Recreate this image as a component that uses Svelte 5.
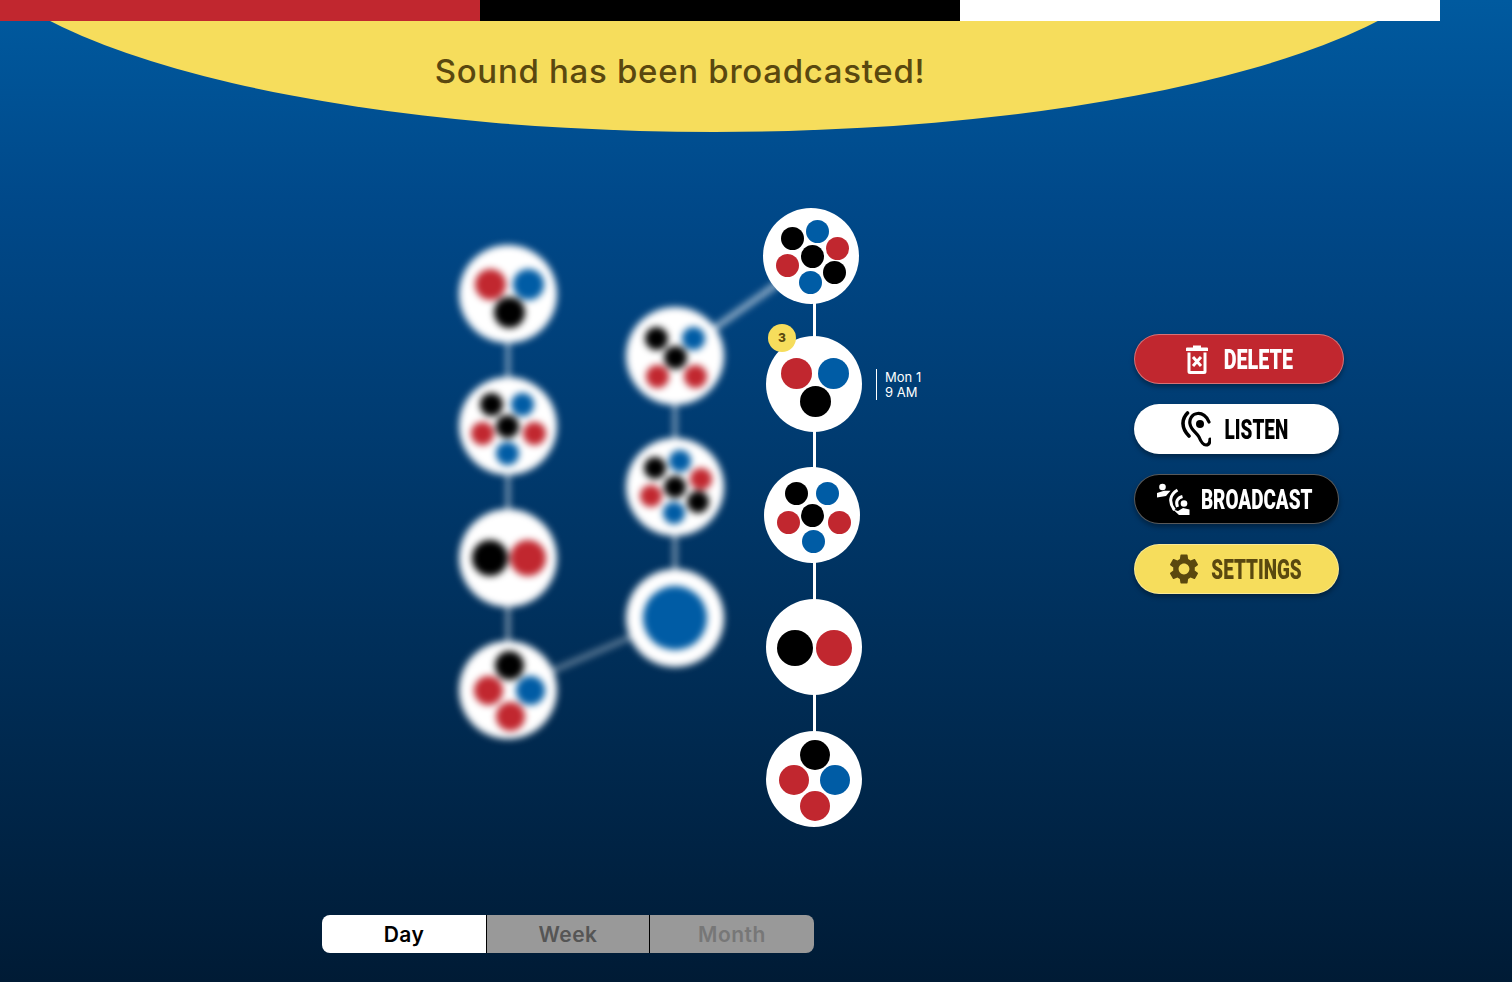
<script>
	const RED = '#c1272f';
	const BLUE = '#005ca5';
	const BLACK = '#000';

	// page coordinates of the node centres, dots are page coordinates too
	const d = (x, y, r, color) => ({ x, y, r, color });

	const sharpNodes = [
		{ x: 811, y: 256, dots: [d(792, 238, 11.5, BLACK), d(817, 231, 11.5, BLUE), d(837, 248, 11.5, RED), d(812, 256, 11.5, BLACK), d(834, 272, 11.5, BLACK), d(810, 282, 11.5, BLUE), d(787, 265, 11.5, RED)] },
		{ x: 814, y: 384, dots: [d(796, 373, 15.5, RED), d(833, 373, 15.5, BLUE), d(815, 401, 15.5, BLACK)] },
		{ x: 812, y: 515, dots: [d(796, 493, 11.5, BLACK), d(827, 493, 11.5, BLUE), d(812, 515, 11.5, BLACK), d(788, 522, 11.5, RED), d(839, 522, 11.5, RED), d(813, 541, 11.5, BLUE)] },
		{ x: 814, y: 647, dots: [d(795, 648, 18, BLACK), d(834, 648, 18, RED)] },
		{ x: 814, y: 779, dots: [d(815, 755, 15, BLACK), d(794, 780, 15, RED), d(835, 780, 15, BLUE), d(815, 806, 15, RED)] }
	];

	const blurredNodes = [
		{ x: 508, y: 294, dots: [d(490, 284, 15.5, RED), d(528, 284, 15.5, BLUE), d(509, 312, 15.5, BLACK)] },
		{ x: 508, y: 426, dots: [d(491, 404, 11.5, BLACK), d(522, 404, 11.5, BLUE), d(507, 426, 11.5, BLACK), d(482, 433, 11.5, RED), d(534, 433, 11.5, RED), d(507, 453, 11.5, BLUE)] },
		{ x: 508, y: 558, dots: [d(490, 558, 18, BLACK), d(528, 558, 18, RED)] },
		{ x: 508, y: 690, dots: [d(509, 665, 14.5, BLACK), d(488, 690, 14.5, RED), d(530, 690, 14.5, BLUE), d(510, 716, 14.5, RED)] },
		{ x: 675, y: 356, dots: [d(656, 338, 11.5, BLACK), d(693, 338, 11.5, BLUE), d(675, 357, 11.5, BLACK), d(657, 376, 11.5, RED), d(695, 376, 11.5, RED)] },
		{ x: 675, y: 487, dots: [d(655, 468, 11, BLACK), d(680, 461, 11, BLUE), d(701, 479, 11, RED), d(675, 487, 11, BLACK), d(698, 502, 11, BLACK), d(674, 513, 11, BLUE), d(651, 496, 11, RED)] },
		{ x: 675, y: 618, dots: [d(675, 618, 32, BLUE)] }
	];

	const NODE_R = 48;
	const TOP = 21; // the canvas starts under the colour bars

	const tabs = ['Day', 'Week', 'Month'];
</script>

{#snippet graphNode(node)}
	<div
		class="node"
		style="left: {node.x - NODE_R}px; top: {node.y - NODE_R - TOP}px"
	>
		{#each node.dots as dot}
			<span
				class="dot"
				style="left: {dot.x - node.x + NODE_R - dot.r}px; top: {dot.y - node.y + NODE_R - dot.r}px; width: {dot.r * 2}px; height: {dot.r * 2}px; background: {dot.color}"
			></span>
		{/each}
	</div>
{/snippet}

<div class="page">
	<div class="banner"><p>Sound has been broadcasted!</p></div>

	<div class="bars">
		<span class="bar red"></span>
		<span class="bar black"></span>
		<span class="bar white"></span>
	</div>

	<div class="stage">
		<div class="canvas">
			<div class="blurred">
				<svg class="wires" viewBox="0 21 1134 860" width="1134" height="860">
					<path d="M508 294V690M675 356V618" stroke="#fff" stroke-opacity="0.6" stroke-width="4" fill="none" />
					<path d="M508 690L675 618" stroke="#fff" stroke-opacity="0.42" stroke-width="5" fill="none" />
					<path d="M675 356L790 275" stroke="#fff" stroke-opacity="0.6" stroke-width="6" fill="none" />
				</svg>
				{#each blurredNodes as node}
					{@render graphNode(node)}
				{/each}
			</div>

			<svg class="wires" viewBox="0 21 1134 860" width="1134" height="860">
				<path d="M814.5 290V779" stroke="#fff" stroke-width="3" fill="none" />
			</svg>
			{#each sharpNodes as node}
				{@render graphNode(node)}
			{/each}

			<span class="badge">3</span>
			<div class="when">
				<span>Mon 1</span>
				<span>9 AM</span>
			</div>
		</div>

		<div class="actions">
			<button class="action delete">
				<svg width="24" height="30" viewBox="0 0 24 30">
					<path d="M1 4.500Q1 3.500 2 3.500H8V1.500H16V3.500H22Q23 3.500 23 4.500V7H1Z" fill="currentColor" />
					<path d="M4 8.500V27.500Q4 28.500 5 28.500H19Q20 28.500 20 27.500V8.500" fill="none" stroke="currentColor" stroke-width="3" />
					<path d="M8 13l8 9M16 13l-8 9" stroke="currentColor" stroke-width="3" fill="none" />
				</svg>
				<span class="label"><span>DELETE</span></span>
			</button>
			<button class="action listen">
				<svg width="30" height="38" viewBox="9 5 30 38">
					<path d="M15.500 8C9.500 14 9 23 17 31" fill="none" stroke="currentColor" stroke-width="3.600" stroke-linecap="round" />
					<path d="M37 17C35 11 30 8 25.500 8.500C20 9 17 14 18 19C19 25 24 27 27 32C29 37 31 40 34 40C37 40 38 37 38 34" fill="none" stroke="currentColor" stroke-width="3.200" stroke-linecap="round" />
					<circle cx="28" cy="19" r="4" fill="currentColor" />
				</svg>
				<span class="label"><span>LISTEN</span></span>
			</button>
			<button class="action broadcast">
				<svg width="34" height="34" viewBox="0 0 34 34">
					<circle cx="6.500" cy="5" r="3.300" fill="currentColor" />
					<path d="M1 15.500V11L8 8.700H14.500L10 14Z" fill="currentColor" />
					<path d="M21.500 8C13 13 13 21 18.500 28" fill="none" stroke="currentColor" stroke-width="3" />
					<path d="M26.500 14.500C21 16 19.500 20 21.500 25" fill="none" stroke="currentColor" stroke-width="3" />
					<circle cx="28" cy="21.500" r="3.300" fill="currentColor" />
					<path d="M17 27.500L22 29L27 26L33.500 27.500V33H23Z" fill="currentColor" />
				</svg>
				<span class="label"><span>BROADCAST</span></span>
			</button>
			<button class="action settings">
				<svg width="36" height="36" viewBox="0 0 24 24">
					<path fill="currentColor" d="M19.140 12.940c.04-.3.06-.61.06-.94 0-.32-.02-.64-.07-.94l2.030-1.580c.18-.14.23-.41.12-.61l-1.920-3.320c-.12-.22-.37-.29-.59-.22l-2.390.96c-.5-.38-1.030-.7-1.620-.94l-.36-2.540c-.04-.24-.24-.41-.48-.41h-3.840c-.24 0-.43.17-.47.41l-.36 2.540c-.59.24-1.130.57-1.620.94l-2.390-.96c-.22-.08-.47 0-.59.22L2.740 8.870c-.12.21-.08.47.12.61l2.030 1.580c-.05.3-.09.63-.09.94s.02.64.07.94l-2.030 1.580c-.18.14-.23.41-.12.61l1.920 3.320c.12.22.37.29.59.22l2.390-.96c.5.38 1.030.7 1.620.94l.36 2.540c.05.24.24.41.48.41h3.840c.24 0 .44-.17.47-.41l.36-2.540c.59-.24 1.130-.56 1.620-.94l2.390.96c.22.08.47 0 .59-.22l1.920-3.320c.12-.22.07-.47-.12-.61l-2.010-1.580zM12 15.600c-1.980 0-3.600-1.620-3.600-3.600s1.620-3.600 3.600-3.600 3.600 1.620 3.600 3.600-1.620 3.600-3.600 3.600z" />
				</svg>
				<span class="label"><span>SETTINGS</span></span>
			</button>
		</div>
	</div>

	<div class="tabs">
		{#each tabs as tab, i}
			<button class="tab" class:active={i == 0} class:muted={i == 2}>{tab}</button>
		{/each}
	</div>
</div>

<style>
	:global(body) {
		margin: 0;
		background: #001b35;
	}

	.page {
		position: relative;
		height: 982px;
		overflow: hidden;
		display: flex;
		flex-direction: column;
		background: linear-gradient(180deg, #005a9f 0%, #00498a 20%, #001b35 100%);
		font-family: Inter, 'Open Sans', sans-serif;
	}

	.banner {
		position: absolute;
		left: -46px;
		top: -300px;
		width: 1520px;
		height: 432px;
		box-sizing: border-box;
		padding: 351px 68px 0 0;
		border-radius: 50%;
		background: #f6dd5c;
		color: #5a480f;
		text-align: center;
	}

	.banner p {
		margin: 0;
		font-size: 33px;
		line-height: 40px;
		font-weight: 500;
		letter-spacing: 0.7px;
	}

	.bars {
		position: relative;
		display: flex;
		height: 21px;
		flex-shrink: 0;
	}

	.bar {
		width: 480px;
	}

	.bar.red {
		background: #c1272f;
	}

	.bar.black {
		background: #000;
	}

	.bar.white {
		background: #fff;
	}

	.stage {
		flex: 1;
		display: flex;
		min-height: 0;
	}

	.canvas {
		position: relative;
		width: 1134px;
		flex-shrink: 0;
	}

	.blurred {
		position: absolute;
		inset: 0;
		filter: blur(3.500px);
	}

	.wires {
		position: absolute;
		left: 0;
		top: 0;
	}

	.node {
		position: absolute;
		width: 96px;
		height: 96px;
		border-radius: 50%;
		background: #fff;
	}

	.blurred .node {
		width: 98px;
		height: 98px;
		margin: -1px;
	}

	.dot {
		position: absolute;
		border-radius: 50%;
	}

	.blurred .dot {
		margin: 1px;
	}

	.badge {
		position: absolute;
		left: 768px;
		top: 303px;
		width: 28px;
		height: 28px;
		border-radius: 50%;
		background: #f6dd5c;
		color: #5a480f;
		font-size: 12px;
		font-weight: 800;
		line-height: 28px;
		text-align: center;
	}

	.when {
		position: absolute;
		left: 876px;
		top: 348px;
		height: 30px;
		padding: 1px 0 0 8px;
		border-left: 1px solid #fff;
		display: flex;
		flex-direction: column;
		justify-content: center;
		color: #fff;
		font-size: 13px;
		line-height: 15px;
	}

	.actions {
		display: flex;
		flex-direction: column;
		align-items: flex-start;
		gap: 20px;
		padding-top: 313px;
	}

	.action {
		display: flex;
		align-items: center;
		justify-content: center;
		width: 205px;
		height: 50px;
		box-sizing: border-box;
		border: 1px solid rgba(255, 255, 255, 0.35);
		border-radius: 25px;
		box-shadow: 0 3px 5px rgba(0, 0, 0, 0.35);
		font-family: Roboto, sans-serif;
		font-size: 27px;
		font-weight: 900;
	}

	/* the label box takes the drawn width, the text inside is squeezed to fit */
	.label {
		display: flex;
		justify-content: center;
		padding-top: 2px;
	}

	.label span {
		flex: none;
		transform: scaleX(0.7);
	}

	.action.delete {
		width: 210px;
		padding: 0;
		gap: 15px;
		background: #c1272f;
		color: #fff;
	}

	.delete .label {
		width: 70px;
	}

	.delete .label span {
		transform: scaleX(0.73);
	}

	.action.listen {
		padding: 0 3px 0 0;
		gap: 13px;
		background: #fff;
		color: #000;
	}

	.listen .label {
		width: 65px;
	}

	.action.broadcast {
		padding: 0 4px 0 0;
		gap: 11px;
		background: #000;
		color: #fff;
	}

	.broadcast .label {
		width: 112px;
	}

	.action.settings {
		padding: 0 5px 0 0;
		gap: 9px;
		background: #f6dd5c;
		color: #5a480f;
	}

	.settings .label {
		width: 91px;
	}

	.tabs {
		display: grid;
		grid-template-columns: 164px 163px 165px;
		margin: 0 0 29px 322px;
		width: 492px;
		height: 38px;
		border-radius: 8px;
		overflow: hidden;
		flex-shrink: 0;
	}

	.tab {
		padding: 0;
		border: 0;
		border-left: 1px solid #000;
		background: #999;
		color: #555;
		font-family: inherit;
		font-size: 21px;
		font-weight: 600;
		letter-spacing: 0.5px;
	}

	.tab.active {
		border-left: 0;
		background: #fff;
		color: #000;
	}

	.tab.muted {
		color: #777;
	}
</style>
